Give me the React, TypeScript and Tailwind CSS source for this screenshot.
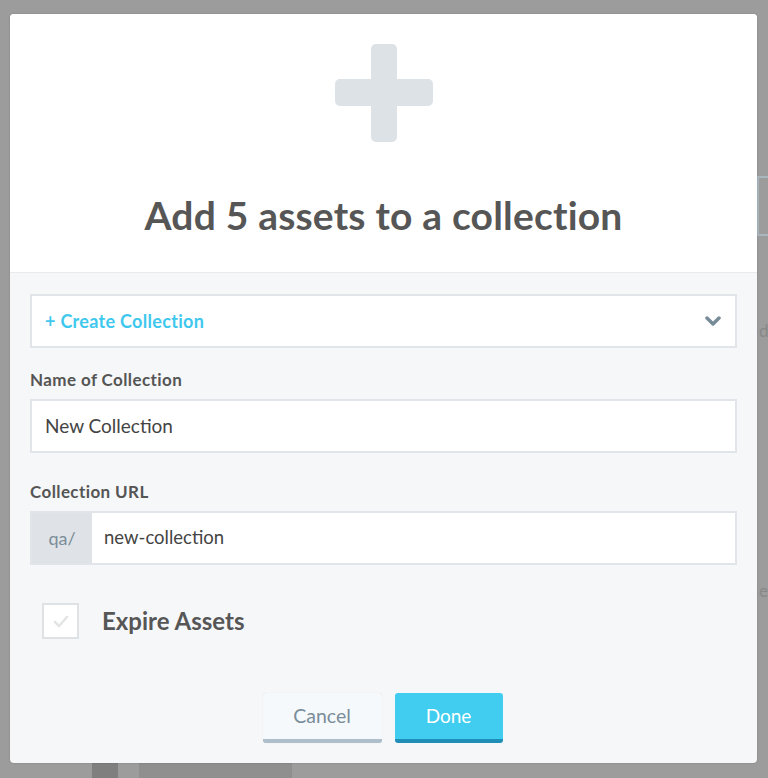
import React from 'react';

const font = { fontFamily: 'Lato, "Open Sans", sans-serif' };

function PlusMark() {
  return (
    <svg width="98" height="98" viewBox="0 0 98 98">
      <rect x="36" y="0" width="26" height="98" rx="5" fill="#dde2e6" />
      <rect x="0" y="35" width="98" height="27" rx="5" fill="#dde2e6" />
    </svg>
  );
}

function Chevron() {
  return (
    <svg width="16" height="11" viewBox="0 0 16 11">
      <path d="M2 2 L8 8 L14 2" fill="none" stroke="#788b98" strokeWidth="3.5" strokeLinecap="round" strokeLinejoin="round" />
    </svg>
  );
}

export default function App() {
  return (
    <div className="relative min-h-[778px] w-[768px] overflow-hidden bg-[#9c9c9c] pt-[14px] pl-[10px]" style={font}>
      {/* background hints behind the modal */}
      <div className="absolute right-0 top-[176px] h-[60px] w-[11px] border-y-2 border-l-2 border-[#a9b6bd]" />
      <span className="absolute left-[759px] top-[318px] text-[17px] text-[#888]">dt</span>
      <span className="absolute left-[759px] top-[578px] text-[17px] text-[#888]">e</span>
      <div className="absolute bottom-0 left-[92px] h-[15px] w-[26px] bg-[#7f7f7f]" />
      <div className="absolute bottom-0 left-[139px] h-[15px] w-[153px] bg-[#8f8f8f]" />

      <div className="relative w-[747px] overflow-hidden rounded-[4px] bg-[#f6f7f9] shadow-[0_0_2px_rgba(0,0,0,0.2)]">
        <div className="flex h-[259px] flex-col items-center border-b border-[#e8eaed] bg-white pt-[30px]">
          <PlusMark />
          <h1 className="mt-[50px] text-[39px] font-bold leading-[46px] tracking-[0.2px] text-[#565656]">
            Add 5 assets to a collection
          </h1>
        </div>

        <div className="px-[20px] pt-[21px] pb-[20px]">
          <div className="flex h-[54px] items-center justify-between border-2 border-[#e1e4e8] bg-white pl-[13px] pr-[14px]">
            <span className="text-[18px] font-bold tracking-[0.3px] text-[#3fc8ee]">+ Create Collection</span>
            <Chevron />
          </div>

          <div className="mt-[22px] text-[17px] font-bold leading-[20px] tracking-[0.4px] text-[#555]">Name of Collection</div>
          <div className="mt-[9px] flex h-[54px] items-center border-2 border-[#e1e4e8] bg-white pl-[13px] text-[19px] text-[#444]">
            New Collection
          </div>

          <div className="mt-[29px] text-[17px] font-bold leading-[20px] tracking-[0.4px] text-[#555]">Collection URL</div>
          <div className="mt-[9px] flex h-[54px] border-2 border-[#e1e4e8] bg-white">
            <div className="flex w-[60px] items-center justify-center bg-[#dfe2e6] text-[18px] text-[#7a8d9a]">qa/</div>
            <div className="flex items-center pl-[12px] text-[18.5px] text-[#444]">new-collection</div>
          </div>

          <div className="mt-[38px] flex items-center pl-[12px]">
            <div className="flex h-[36px] w-[37px] items-center justify-center border-2 border-[#dfe2e5] bg-white">
              <svg width="16" height="13" viewBox="0 0 16 13">
                <path d="M2 7 L6 11 L14 2" fill="none" stroke="#e2e4e6" strokeWidth="2.5" strokeLinecap="round" strokeLinejoin="round" />
              </svg>
            </div>
            <span className="ml-[23px] text-[24px] font-bold text-[#565656]">Expire Assets</span>
          </div>

          <div className="mt-[54px] flex justify-center gap-[13px] pr-[2px]">
            <button className="h-[50px] w-[119px] rounded-[3px] border-b-[4px] border-[#aebfcb] bg-[#f5f9fb] text-[19.5px] text-[#7a8d9a] shadow-[0_0_1px_rgba(0,0,0,0.15)]">
              Cancel
            </button>
            <button className="h-[50px] w-[108px] rounded-[3px] border-b-[4px] border-[#1f8fb8] bg-[#40cdf0] text-[19px] text-white">
              Done
            </button>
          </div>
        </div>
      </div>
    </div>
  );
}
